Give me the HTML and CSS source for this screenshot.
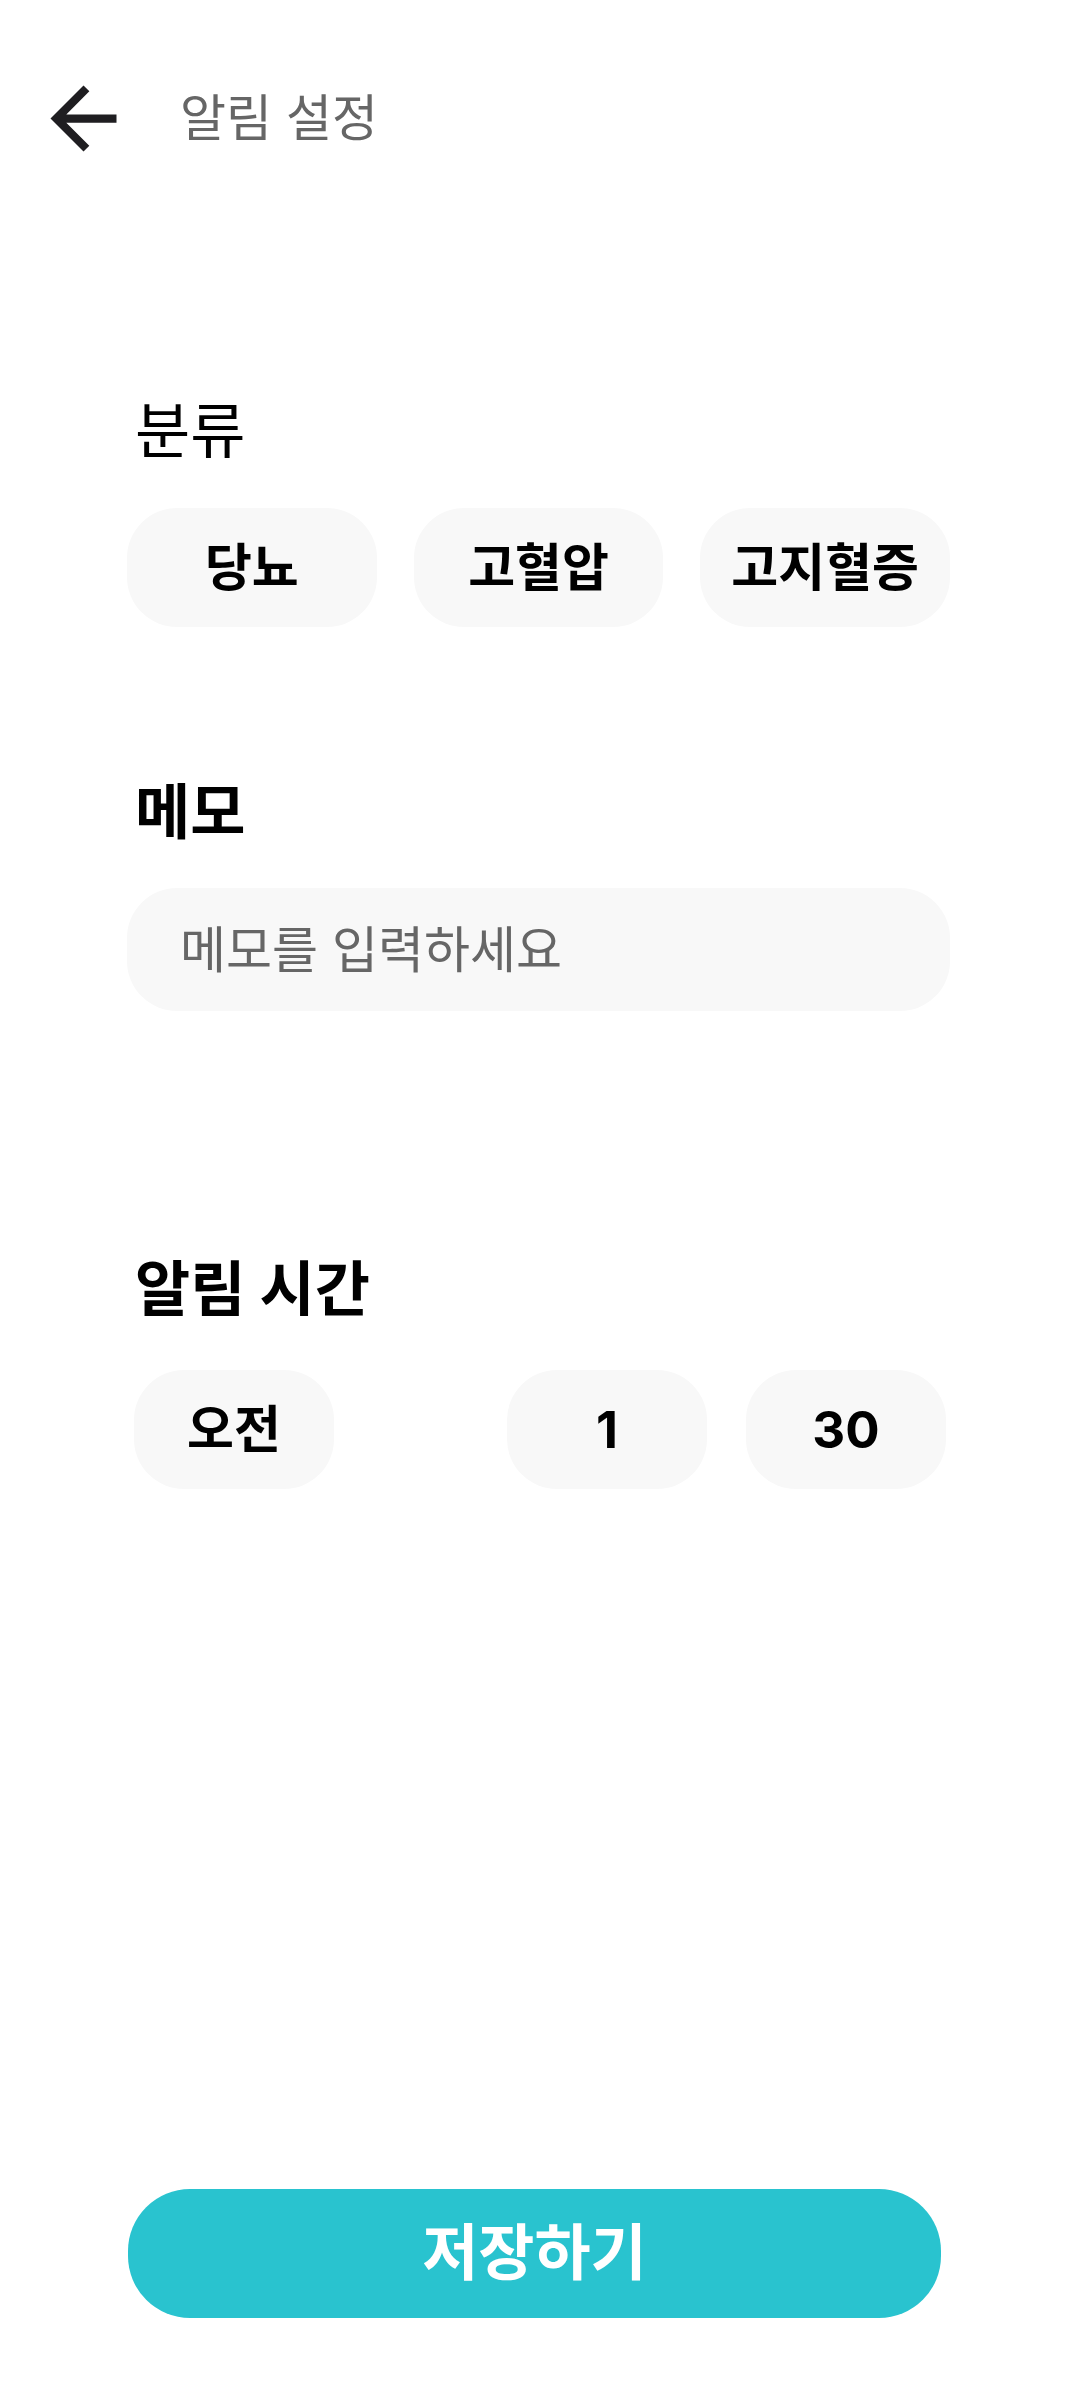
FILE: index.html
```html
<!DOCTYPE html>
<html lang="ko">
<head>
<meta charset="utf-8">
<title>알림 설정</title>
<link rel="stylesheet" href="styles.css">
</head>
<body>
<div class="page">
  <header class="topbar">
    <svg class="back" viewBox="0 0 24 24" width="99" height="99" aria-hidden="true">
      <path d="M20 11H7.83l5.59-5.59L12 4l-8 8 8 8 1.41-1.41L7.83 13H20v-2z" fill="#1f1e21"/>
    </svg>
    <h1 class="title">알림 설정</h1>
  </header>

  <main class="content">
    <section class="section section-category">
      <h2 class="label label-regular">분류</h2>
      <div class="chips">
        <button class="chip">당뇨</button>
        <button class="chip">고혈압</button>
        <button class="chip">고지혈증</button>
      </div>
    </section>

    <section class="section section-memo">
      <h2 class="label">메모</h2>
      <div class="memo-input">메모를 입력하세요</div>
    </section>

    <section class="section section-time">
      <h2 class="label">알림 시간</h2>
      <div class="time-row">
        <button class="chip chip-time chip-ampm">오전</button>
        <button class="chip chip-time chip-num">1</button>
        <button class="chip chip-time chip-num">30</button>
      </div>
    </section>
  </main>

  <footer class="footer">
    <button class="save">저장하기</button>
  </footer>
</div>
</body>
</html>
```

FILE: styles.css
```css
* {
  box-sizing: border-box;
}

html, body {
  margin: 0;
  padding: 0;
  background: #ffffff;
}

body {
  font-family: Inter, "Noto Sans CJK KR", sans-serif;
  color: #000;
}

.page {
  width: 1080px;
  min-height: 2400px;
  display: flex;
  flex-direction: column;
}

.topbar {
  height: 236px;
  display: flex;
  align-items: center;
  padding-left: 34px;
}

.back {
  display: block;
  flex: none;
}

.title {
  margin: 0 0 0 47px;
  font-size: 50px;
  font-weight: 400;
  line-height: 1;
  color: #666666;
}

.content {
  padding: 0 130px 0 127px;
}

.section-category {
  margin-top: 165px;
}

.section-memo {
  margin-top: 155px;
}

.section-time {
  margin-top: 248px;
}

.label {
  margin: 0 0 0 8px;
  font-size: 60px;
  line-height: 1;
  font-weight: 700;
  height: 60px;
}

.label-regular {
  font-weight: 400;
}

.chips {
  margin-top: 47px;
  display: flex;
  gap: 37px;
}

.chip {
  border: none;
  background: #f8f8f8;
  border-radius: 50px;
  width: 250px;
  height: 119px;
  padding: 0;
  font-family: Inter, "Noto Sans CJK KR", sans-serif;
  font-size: 51px;
  font-weight: 700;
  color: #000;
  line-height: 1;
  display: flex;
  align-items: center;
  justify-content: center;
}

.memo-input {
  margin-top: 46px;
  height: 123px;
  background: #f8f8f8;
  border-radius: 50px;
  display: flex;
  align-items: center;
  padding-left: 53px;
  font-size: 50px;
  line-height: 1;
  color: #666666;
}

.time-row {
  margin-top: 51px;
  display: flex;
  gap: 39px;
  padding-left: 7px;
}

.chip-time {
  width: 200px;
}

.chip-ampm {
  margin-right: 134px;
}

.footer {
  margin-top: auto;
  padding: 0 0 82px 128px;
}

.save {
  display: flex;
  align-items: center;
  justify-content: center;
  width: 813px;
  height: 129px;
  border: none;
  border-radius: 62px;
  background: #29c3cf;
  color: #ffffff;
  font-family: Inter, "Noto Sans CJK KR", sans-serif;
  font-size: 61px;
  font-weight: 700;
  line-height: 1;
  padding: 0;
}
```
